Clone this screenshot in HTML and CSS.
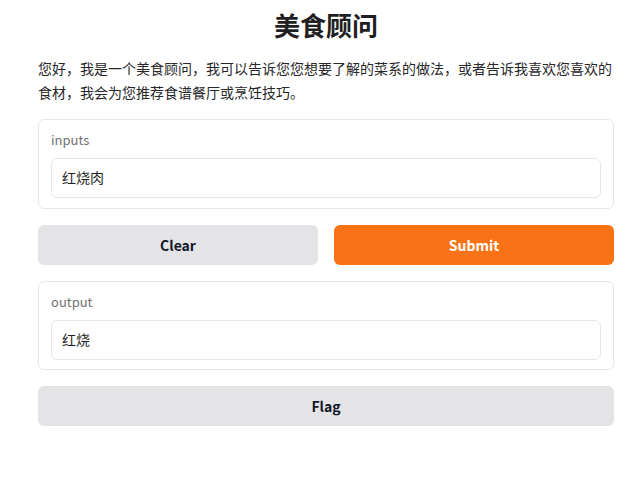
FILE: index.html
```html
<!DOCTYPE html>
<html lang="zh">
<head>
<meta charset="utf-8">
<title>美食顾问</title>
<link rel="stylesheet" href="styles.css">
</head>
<body>
<main class="app">
  <h1 class="title">美食顾问</h1>
  <p class="desc">您好，我是一个美食顾问，我可以告诉您您想要了解的菜系的做法，或者告诉我喜欢您喜欢的食材，我会为您推荐食谱餐厅或烹饪技巧。</p>
  <section class="block">
    <div class="label">inputs</div>
    <div class="textbox">红烧肉</div>
  </section>
  <div class="row">
    <button class="btn secondary">Clear</button>
    <button class="btn primary">Submit</button>
  </div>
  <section class="block out">
    <div class="label">output</div>
    <div class="textbox">红烧</div>
  </section>
  <button class="btn secondary full">Flag</button>
</main>
</body>
</html>
```

FILE: styles.css
```css
* { box-sizing: border-box; }
html, body { margin: 0; padding: 0; background: #ffffff; }
body {
  font-family: "Noto Sans CJK SC", "Noto Sans", sans-serif;
  color: #27272a;
}
.app {
  width: 576px;
  margin-left: 38px;
  display: flex;
  flex-direction: column;
  gap: 16px;
}
.title {
  margin: 7px 0 0;
  font-size: 26px;
  line-height: 36px;
  font-weight: 700;
  text-align: center;
  color: #1f1f23;
}
.desc {
  margin: -3px 0 -1px;
  font-size: 14px;
  line-height: 24px;
  color: #27272a;
}
.block {
  border: 1px solid #e5e7eb;
  border-radius: 6px;
  padding: 10px 12px;
  display: flex;
  flex-direction: column;
  gap: 8px;
}
.block.out {
  padding-bottom: 9px;
}
.label {
  font-size: 13px;
  line-height: 19px;
  color: #737373;
}
.textbox {
  height: 40px;
  border: 1px solid #e5e7eb;
  border-radius: 6px;
  padding: 0 10px 3px;
  display: flex;
  align-items: center;
  font-size: 14px;
  color: #1f1f23;
}
.label + .textbox {
  margin-top: 1px;
}
.row {
  display: flex;
  gap: 16px;
}
.btn {
  flex: 1;
  height: 40px;
  border: none;
  border-radius: 6px;
  font-family: "Noto Sans CJK SC", "Noto Sans", sans-serif;
  font-size: 14px;
  font-weight: 700;
  cursor: pointer;
}
.secondary { background: #e4e4e7; color: #111827; }
.primary { background: #f97316; color: #ffffff; }
.full { width: 100%; flex: none; }
```
